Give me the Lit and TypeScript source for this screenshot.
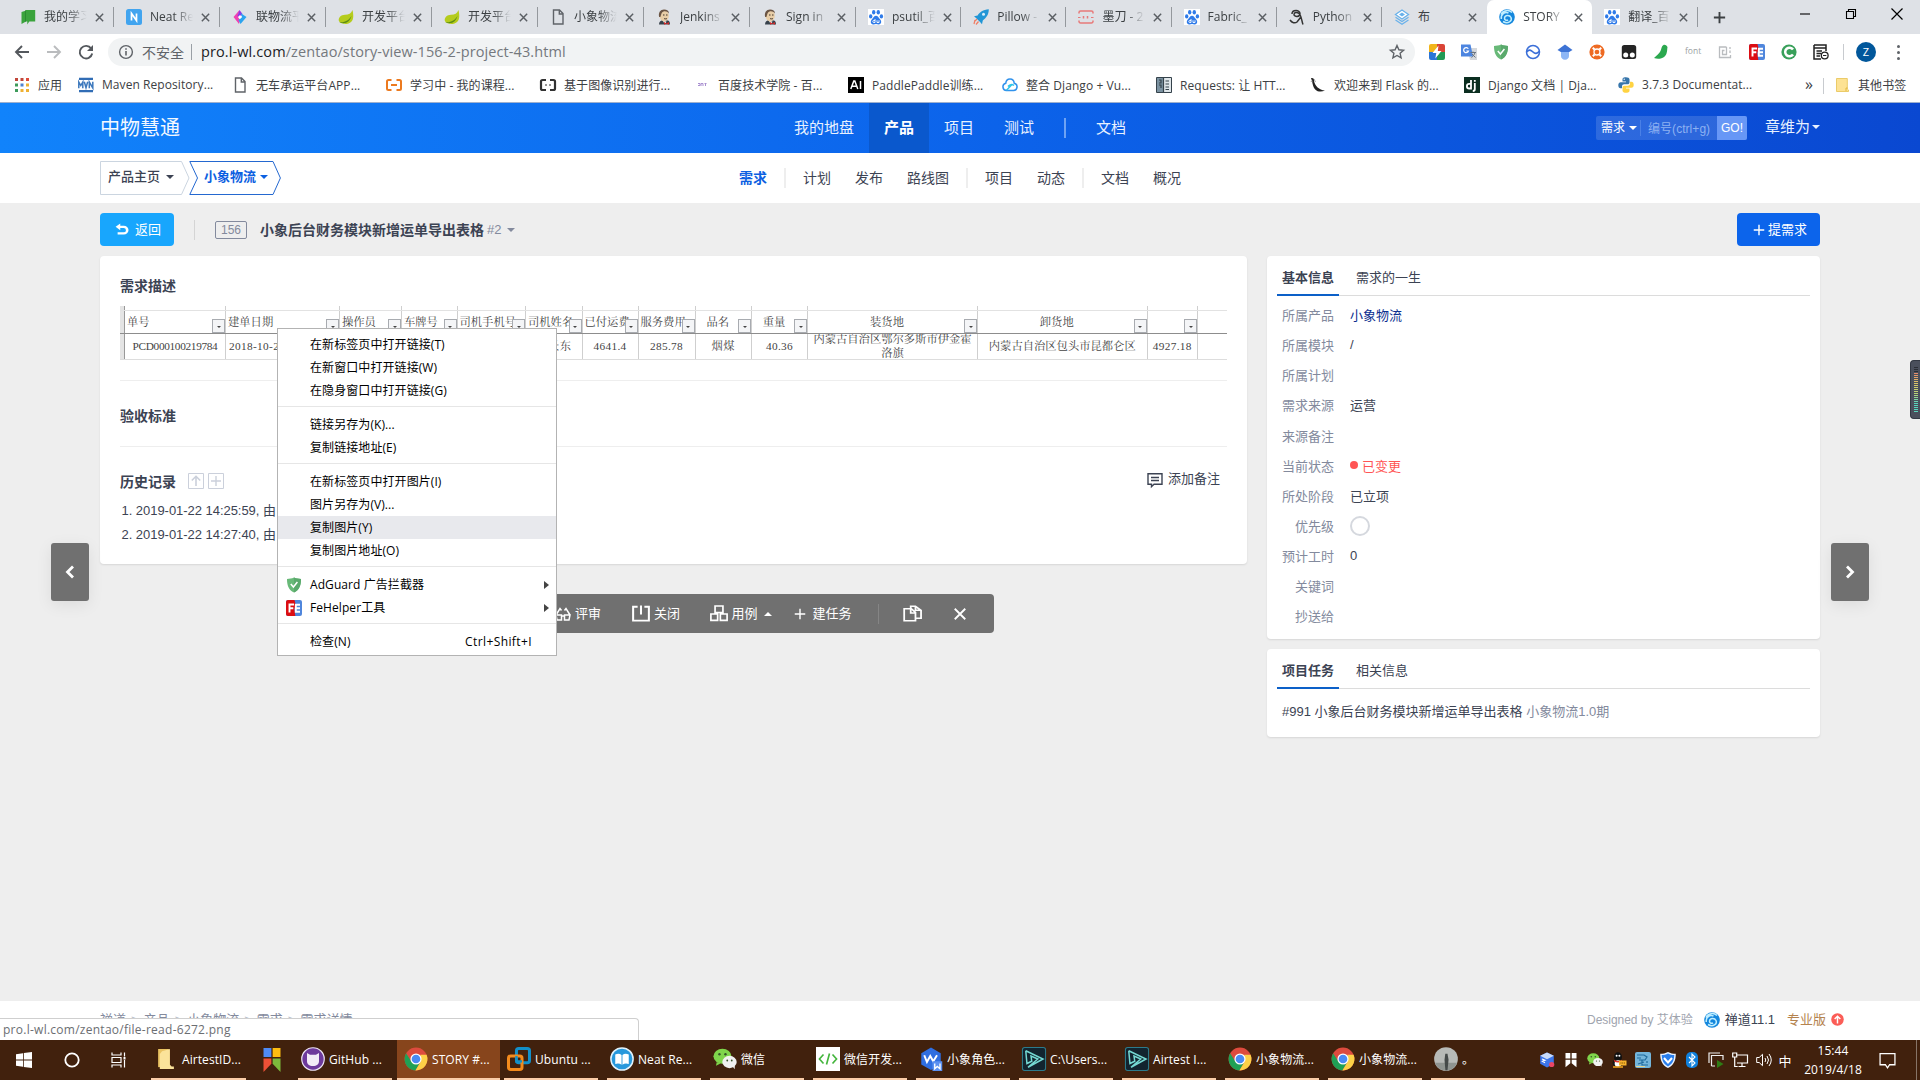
import { LitElement, html, svg, css, nothing } from "lit";
import { customElement, property } from "lit/decorators.js";
import { classMap } from "lit/directives/class-map.js";

/* ---------- icon artwork, 16x16 grid ---------- */
const chromeBall = svg`<circle cx="8" cy="8" r="7.6" fill="#dd4b3e"/><path d="M1.4 4.2A7.6 7.6 0 0 0 7.6 15.6L11 9.8 8 8 4.9 9.7z" fill="#1fa055"/><path d="M15.1 5.2A7.6 7.6 0 0 1 7.6 15.6L11.2 9.6 10.9 5.2z" fill="#fdd047"/><circle cx="8" cy="8" r="3.7" fill="#fff"/><circle cx="8" cy="8" r="2.9" fill="#4a8af4"/>`;
const paw = svg`<rect width="16" height="16" fill="#fff"/><g fill="#2f7be9"><ellipse cx="2.7" cy="7.4" rx="1.7" ry="2.1"/><ellipse cx="5.7" cy="3.2" rx="1.7" ry="2.2"/><ellipse cx="10.3" cy="3.2" rx="1.7" ry="2.2"/><ellipse cx="13.4" cy="7.4" rx="1.7" ry="2.1"/><path d="M8 6.8c2 0 2.5 2 4 3.4 2 2 1.4 5-1.2 5.2-1 .1-1.800-.3-2.800-.3s-1.800.4-2.800.3C2.600 15.200 2 12.200 4 10.200 5.500 8.800 6 6.800 8 6.800z"/></g><path d="M7 10v3.500H5.800a1 1 0 0 1 0-2H7M9 11.300v2.200h2v-2.200" fill="none" stroke="#fff" stroke-width=".9"/>`;
const leaf = svg`<path d="M14.500 1C15.600 6 16.500 12.500 10.500 14.400 6 15.800 1.500 14 .8 11.800.3 8.500 3 6 7 5.800c4 0 6-1.500 7.500-4.800z" fill="#b5cc1c"/><path d="M1.200 13.200c5 .8 9.800-1.600 12.300-6.400-1.300 6-6.500 9.200-12.300 6.400z" fill="#5c8c14"/>`;
const page = svg`<path d="M3.500 1h6l3.500 3.600V15h-9.500zM9.300 1v4H13" fill="none" stroke="#5f6368" stroke-width="1.400"/>`;
const jenkins = svg`<path d="M3 15.500c0-3 2-4 4-4.500l5 .500c1.500.5 2 2 2 4z" fill="#38424c"/><path d="M7 12l2 3.500 1.500-3z" fill="#fff"/><ellipse cx="8.200" cy="6.700" rx="4.600" ry="5.900" fill="#e8cda6"/><path d="M3.200 8C2 3.500 4.500.4 8 .4c3 0 5 1.600 5 4-1.500-2-3.500-2.500-5.500-2C5.500 3 5.200 5.500 4.400 8z" fill="#6a5444"/><path d="M7 6h1.500M10 6h1.500M8 9.500c1 .500 2 .500 3 0" stroke="#41342b" stroke-width="1" fill="none"/><path d="M8 13l2.500 1.200L13 13v2.800l-2.500-1L8 15.800z" fill="#c92b2b"/>`;
const shield = svg`<path d="M8 .5c2.200 1 4.700 1.400 7 1.400 0 6-1.400 10.700-7 13.700C2.400 12.600 1 7.900 1 1.900 3.300 1.900 5.800 1.500 8 .5z" fill="#68b978"/><path d="M8 .5c2.200 1 4.700 1.400 7 1.400 0 6-1.400 10.700-7 13.700z" fill="#5aa96c"/><path d="M4.800 7l2.600 3 4-5" fill="none" stroke="#fff" stroke-width="1.500"/>`;
const fe = svg`<rect width="16" height="16" rx="2" fill="#4f86dc"/><path d="M2 0h6.500l1.300 5-1.500 4 1 7H2a2 2 0 0 1-2-2V2a2 2 0 0 1 2-2z" fill="#dc0d12"/><path d="M3.500 12.500v-8H8M3.500 8.300h3.800M14 4.700H9.800v7H14M9.800 8.200H14" stroke="#fff" stroke-width="1.900" fill="none"/>`;
const wechat = svg`<ellipse cx="6.300" cy="6.200" rx="6" ry="5" fill="#7fd54b"/><path d="M2.500 10l-.5 2.500 3-1.500z" fill="#7fd54b"/><ellipse cx="11" cy="10" rx="4.800" ry="4.100" fill="#f1f1f1"/><path d="M13 13l1.500 1.800v-2.500z" fill="#f1f1f1"/><g fill="#37542a"><circle cx="4.300" cy="4.800" r=".8"/><circle cx="8.300" cy="4.800" r=".8"/><circle cx="9.500" cy="9" r=".6"/><circle cx="12.500" cy="9" r=".6"/></g>`;
const airtest = svg`<rect x=".3" y=".3" width="15.400" height="15.400" rx="1.500" fill="#12242f" stroke="#2c7b8c" stroke-width=".7"/><path d="M2.500 2.500L14 8 4 13.500M2.500 2.500l.8 8.500L6.500 9.500 6 6l4.500 2-6.500 5.500" fill="none" stroke="#75d9d3" stroke-width="1"/>`;
const zenBall = svg`<circle cx="8" cy="8" r="7.800" fill="#1487dd"/><path d="M2 5.500C4 1 10 .500 13 3.500M2.300 10C1.500 5 6 2.500 9.500 4M4 12.500C9 15.500 13.500 12 12 8.500c-1.500-3-6-2.500-6.500.5-.2 2 2 3 3.500 1.800" fill="none" stroke="#bfeeff" stroke-width="1.500"/>`;

const ICONS: Record<string, unknown> = {
  chromeBall, paw, leaf, page, jenkins, shield, fe, wechat, airtest, zenBall,
  book: svg`<path d="M1.500 3l4-1.300v11L1.500 15zM5.500 1h9.700v11.500H9.300l-2 3v-3H5.500z" fill="#3aa33c"/><path d="M5.500 1.300v11.500" stroke="#217a28" stroke-width=".6"/>`,
  neat: svg`<rect width="16" height="16" rx="2.500" fill="#41a4ef"/><path d="M5.500 11.500V4.500l5 7v-7" fill="none" stroke="#fff" stroke-width="1.700"/>`,
  gem: svg`<path d="M7.500 1L1.500 8l5.500 7 1-4-2-3z" fill="#ef42b2"/><path d="M7.500 1l3 4-3 4-2-2z" fill="#8e36e6"/><path d="M8.500 4L14.500 8 8.500 15l-2-4 3.500-3z" fill="#2ba4ef"/><path d="M8 6l2 2-2 2-2-2z" fill="#fff"/>`,
  rocket: svg`<path d="M15.800.3C10 .5 6.600 3.600 4.600 6.500L1 7.300l2 1.600 4.300 4.300L9 15.300l.8-3.800C13 9 15.800 6 15.800.3z" fill="#2196d6"/><circle cx="10.500" cy="5.300" r="1.500" fill="#d7eefb"/><path d="M1 15l1-4M3 15.500l2.500-3M1.500 12.500L4 10" stroke="#ef7c63" stroke-width="1.200"/>`,
  modao: svg`<path d="M1 4.500V3.500a1.500 1.500 0 0 1 1.500-1.500h11A1.500 1.500 0 0 1 15 3.500v1M1 11.500v1A1.500 1.500 0 0 0 2.500 14h11a1.500 1.500 0 0 0 1.500-1.500v-1M5.500 7v2.500M9.500 7v2.500" fill="none" stroke="#e77a7a" stroke-width="1.500"/><path d="M0 8.500h2.500M13 8.500h2.500" stroke="#e77a7a" stroke-width="1"/>`,
  pyglyph: svg`<path d="M3 5c0-4.500 8-4.500 8-.5S5 8 5 5.500s3-2.500 5-1c2.500 2 2.500 7 4 11M11.500 8.500L8 13c-2 1.500-5 1-7-2" fill="none" stroke="#333" stroke-width="1.500"/>`,
  layers: svg`<path d="M8 1l6.500 4.500L8 10 1.500 5.500z" fill="#fff" stroke="#69b1ea" stroke-width="1.300"/><path d="M8 3.500l3 2-3 2-3-2z" fill="#69b1ea"/><path d="M1.500 8.300L8 12.500l6.500-4.200M1.500 11L8 15.200l6.500-4.200" fill="none" stroke="#69b1ea" stroke-width="1.200"/>`,
  apps: svg`<g><path d="M1 1h3v3H1zM6.500 1h3v3h-3z" fill="#c1463a"/><path d="M12 1h3v3h-3z" fill="#de4b3b"/><path d="M1 6.500h3v3H1z" fill="#3d9b5b"/><path d="M6.500 6.500h3v3h-3z" fill="#4f82cf"/><path d="M12 6.500h3v3h-3z" fill="#efb133"/><path d="M1 12h3v3H1z" fill="#3d9b5b"/><path d="M6.500 12h3v3h-3zM12 12h3v3h-3z" fill="#efb133"/></g>`,
  mvn: svg`<path d="M1 .8h14v2.300H1zM1 13h14v2.300H1z" fill="#316db5"/><path d="M.8 11.300V5l2 3.500 2-3.500v6.300M6.300 4.800l1.700 6 1.700-6M11.300 11.300V5l3.500 6V4.800" fill="none" stroke="#3d79bd" stroke-width="1.500"/>`,
  brO: svg`<path d="M5.500 3H2.500Q1 3 1 4.500v7Q1 13 2.500 13h3M10.500 3h3Q15 3 15 4.500v7q0 1.500-1.500 1.500h-3M5 8h6" fill="none" stroke="#ec7a1f" stroke-width="2"/>`,
  brK: svg`<path d="M6 3H2.500Q1 3 1 4.500v7Q1 13 2.500 13H6M10 3h3.500Q15 3 15 4.500v7q0 1.500-1.500 1.500H10M5.500 8h1M9.500 8h1" fill="none" stroke="#333" stroke-width="2.200"/>`,
  tiny: svg`<path d="M4 6.500h2v2H4M7 9V6.500h2V9M10.500 6.500h2M11.500 6.500V9" fill="none" stroke="#a88fd0" stroke-width="1"/>`,
  ai: svg`<rect width="16" height="16" fill="#000"/><path d="M2.800 12l3-8h1l3 8M4 9.300h4.600M12.500 4v8" fill="none" stroke="#fff" stroke-width="1.500"/>`,
  cloud: svg`<path d="M4.500 13.500a3.700 3.700 0 0 1-.7-7.300C4 3.500 6 2 8 2s4 1.500 4.200 4.200a3.700 3.700 0 0 1-.7 7.300z" fill="none" stroke="#3192ec" stroke-width="1.500"/><path d="M4.500 13.200L10 7.500M6 9.500c1.500-2 4-2.500 6-1" fill="none" stroke="#2fc4e9" stroke-width="1.500"/>`,
  reqs: svg`<path d="M.5.5h15v15H.5z" fill="#dfe6ea" stroke="#35424b"/><path d="M1 1h6v14H1z" fill="#7b92a1"/><path d="M7.500 1v14M3 3h2v3H3M3 8h2v3M9.500 4H13M9.500 7H13M9.500 10H13M9.500 12.500H13" fill="none" stroke="#35424b" stroke-width="1.200"/>`,
  flask: svg`<path d="M1 1c2-.5 3.500.5 3 3C5 9 9 13 15 13.500c-3.500 1.800-7.500 1.300-9.500-.8C3 10.500 2.500 6 2 4z" fill="#222"/><path d="M4 2l1.500 3M.8 4.500L3 4" stroke="#888" stroke-width=".8"/>`,
  dj: svg`<rect width="16" height="16" fill="#0b2e20"/><path d="M7 3v8.500H5.200a2.200 2.200 0 0 1 0-4.600H7M10.800 6v6.300c0 1.200-.8 1.700-2 1.700M10.800 3v1.700" fill="none" stroke="#fff" stroke-width="1.800"/>`,
  python: svg`<path d="M7.800.3C4.800.3 4.500 1.600 4.500 2.600v1.800H8v.8H2.700C1 5.200.3 6.500.3 8.300s.9 3 2.200 3H4V9.500c0-1.500 1-2.200 2.300-2.200h3.400c1 0 1.800-.8 1.800-1.800V2.600C11.500 1 10 .3 7.800.3z" fill="#3776ab"/><path d="M8.200 15.700c3 0 3.300-1.300 3.300-2.300v-1.800H8v-.8h5.300c1.700 0 2.400-1.300 2.400-3.100s-.9-3-2.200-3H12v1.800c0 1.500-1 2.200-2.300 2.200H6.300c-1 0-1.800.8-1.800 1.800v2.900c0 1.600 1.500 2.300 3.700 2.300z" fill="#ffd342"/><circle cx="6.200" cy="2.300" r=".7" fill="#fff"/>`,
  folderY: svg`<path d="M2.500 1.500h10.800v10.500l1.200 1V14.500h-12z" fill="#fde293" stroke="#e9c65d" stroke-width=".9"/><path d="M12 14v-3h1.500" fill="none" stroke="#e2b93f"/>`,
  info: svg`<circle cx="8" cy="8" r="6.400" fill="none" stroke="#5f6368" stroke-width="1.400"/><path d="M8 7v4.500M8 4.300v1.500" stroke="#5f6368" stroke-width="1.600"/>`,
  back: svg`<path d="M15 8H2.500M8 2L2 8l6 6" fill="none" stroke="#54585d" stroke-width="1.900"/>`,
  fwd: svg`<path d="M1 8h12.500M8 2l6 6-6 6" fill="none" stroke="#babcbe" stroke-width="1.900"/>`,
  reload: svg`<path d="M13.200 4.500A6.300 6.300 0 1 0 14.200 9.500" fill="none" stroke="#54585d" stroke-width="1.900"/><path d="M15 1v6H9z" fill="#54585d"/>`,
  star: svg`<path d="M8 1.500l1.900 4.300 4.700.4-3.500 3.100 1 4.600L8 11.500l-4.100 2.400 1-4.600L1.400 6.200l4.700-.4z" fill="none" stroke="#5f6368" stroke-width="1.400"/>`,
  bolt: svg`<path d="M0 2a2 2 0 0 1 2-2h6v8H0z" fill="#f1b51b"/><path d="M8 0h6a2 2 0 0 1 2 2v6H8z" fill="#da4436"/><path d="M0 8h8v8H2a2 2 0 0 1-2-2z" fill="#2b75d6"/><path d="M8 8h8v6a2 2 0 0 1-2 2H8z" fill="#229955"/><path d="M9.500 1.500L3.500 9h3.800l-1 5.500L12.500 7H8.800z" fill="#fff"/>`,
  gtrans: svg`<path d="M6 4h10v12H9z" fill="#d5d8dc"/><path d="M0 .5h9.500L12 12.500H0z" fill="#4d85e0"/><path d="M7.300 4.800A2.500 2.500 0 1 0 7.500 7H5.300" fill="none" stroke="#fff" stroke-width="1.200"/><path d="M9.500 8.500H15M12 7.500v1M14 8.500c-.5 2-2 4-3.500 5M11 10l3.500 3.500" fill="none" stroke="#6b7480" stroke-width="1"/>`,
  ring: svg`<circle cx="8" cy="8" r="6.500" fill="none" stroke="#3b6fd8" stroke-width="1.500"/><path d="M1.500 8C4 5 6 6 8 8s4 2 6.500-1" fill="none" stroke="#3b6fd8" stroke-width="1.700"/>`,
  gradcap: svg`<path d="M8 .5l7.500 5.500L8 10.500.5 6z" fill="#3d73d5"/><path d="M4 8h8v4c0 2-1.500 3.700-4 3.700S4 14 4 12z" fill="#8db6f5"/>`,
  orange: svg`<circle cx="8" cy="8" r="7.600" fill="#ee6a22"/><circle cx="8" cy="8" r="3" fill="none" stroke="#fff" stroke-width="1.300"/><path d="M3.800 3.800l1.700 1.700M12.200 3.800l-1.700 1.700M3.800 12.200l1.700-1.700M12.200 12.200l-1.700-1.700" stroke="#fff" stroke-width="2"/>`,
  tamper: svg`<rect x=".8" y="1" width="14.400" height="14" rx="2.500" fill="#242424"/><circle cx="4.700" cy="11" r="2.500" fill="#fff"/><circle cx="11.300" cy="11" r="2.500" fill="#fff"/>`,
  bird: svg`<path d="M10.500 1C8.500 2 8.500 4.500 7.500 7c-1 2.500-4 4.500-6.500 7 5 2 11 0 12.500-4.500 1-3 .5-4 1-6.500-1-2-3-2.500-4-2z" fill="#2ba84f"/>`,
  spiral: svg`<path d="M9.500 3H2.500v10.500h11V11M9.500 3v7.500H5.500V6.500h2M13 3v2M13 6.500V9" fill="none" stroke="#b9bcbf" stroke-width="1.300"/>`,
  cgreen: svg`<circle cx="8" cy="8" r="7.600" fill="#38a05a"/><path d="M12 5.500a4.300 4.300 0 1 0 0 5" fill="none" stroke="#fff" stroke-width="2.500"/>`,
  docclock: svg`<path d="M1 1h12v6M1 1v14h7" fill="none" stroke="#222" stroke-width="1.500"/><path d="M1 4h12M3.500 7H9M3.500 9.500H8M3.500 12H7" stroke="#222" stroke-width="1.300"/><circle cx="11.700" cy="11.500" r="3.400" fill="#fff" stroke="#222" stroke-width="1.300"/><path d="M10 11.500h3.400" stroke="#222"/>`,
  undo: svg`<path d="M6 .5v2.800h4a5.400 5.400 0 0 1 0 10.900H3v-2.700h6.800a2.700 2.700 0 0 0 0-5.400H6v2.800L.7 4.700z" fill="#fff"/>`,
  comment: svg`<path d="M1 1.700h14v10.600H7l-2.500 2.400v-2.400H1zM4 5.500h8M4 8.500h8" fill="none" stroke="#3c4353" stroke-width="1.400"/>`,
  boxUp: svg`<path d="M.5.5h15v15H.5z" fill="none" stroke="#cbd0db"/><path d="M8 13V4M3.800 7.500L8 3.300l4.200 4.200" fill="none" stroke="#cbd0db" stroke-width="1.600"/>`,
  boxPlus: svg`<path d="M.5.5h15v15H.5z" fill="none" stroke="#cbd0db"/><path d="M8 3v10M3 8h10" fill="none" stroke="#cbd0db" stroke-width="1.400"/>`,
  plus: svg`<path d="M8 1v14M1 8h14" stroke="currentColor" stroke-width="1.900"/>`,
  close: svg`<path d="M2 2l12 12M14 2L2 14" stroke="currentColor" stroke-width="2.100"/>`,
  left: svg`<path d="M11 2.500L5.500 8l5.500 5.500" fill="none" stroke="#fff" stroke-width="2.800"/>`,
  right: svg`<path d="M5 2.500L10.500 8 5 13.500" fill="none" stroke="#fff" stroke-width="2.800"/>`,
  glasses: svg`<path d="M1 9h5.500v5H2zM9.500 9H15l-1 5H9.500zM6.500 10h3M1 9l4-6.500 1.500 2M15 9l-4-6.500-1.500 2" fill="none" stroke="#fff" stroke-width="1.500"/>`,
  off: svg`<path d="M5 1.700H1v13h14v-13h-4M8 .5v8.500" fill="none" stroke="#fff" stroke-width="1.800"/>`,
  usecase: svg`<path d="M4.500 1h7v6h-7zM.8 8.500h6v6h-6zM9.200 8.500h6v6h-6z" fill="none" stroke="#fff" stroke-width="1.500"/>`,
  copy: svg`<path d="M6.500 3.500V1.200h4L15.200 5v7.500H11M10.500 1.200V5h4.700M1 3.500h6L10.500 7v7.800H1zM6.500 3.500V7.500h4" fill="none" stroke="#fff" stroke-width="1.500"/>`,
  upBadge: svg`<circle cx="8" cy="8" r="7.700" fill="#fb5d57"/><path d="M8 13V4.500M4.500 7.500L8 4l3.500 3.500" fill="none" stroke="#fff" stroke-width="1.800"/>`,
  win: svg`<path d="M0 2.200l7-1v6.400H0zM7.800 1.100L16 0v7.600H7.800zM0 8.400h7v6.400l-7-1zM7.800 8.400H16V16l-8.200-1.100z" fill="#fff"/>`,
  cortana: svg`<circle cx="8" cy="8" r="6.700" fill="none" stroke="#fff" stroke-width="1.800"/>`,
  taskview: svg`<path d="M1 .5V3h9V.5M1 5.500h9v5H1zM1 15.500V13h9v2.500M13.500.5v4M13.500 8v7.500" fill="none" stroke="#fff" stroke-width="1.200"/><path d="M12.500 5h2v2.500h-2z" fill="#fff"/>`,
  folder: svg`<path d="M1 0h9.500v14.500H1z" fill="#e9c261"/><path d="M4.500 1.800l7-1.800v12.500l1.500 1.500H15V16H2.500V4z" fill="#fbe39a"/>`,
  flag4: svg`<path d="M1.200 0h6.300v6H1.200z" fill="#4f8bf5"/><path d="M8.500 0h6.300v6H8.500z" fill="#fdbd10"/><path d="M1.200 7h6.300v3.500L1.200 16z" fill="#ee5036"/><path d="M8.500 7h6.300v9L8.500 10.500z" fill="#7db93b"/>`,
  github: svg`<circle cx="8" cy="8" r="7.500" fill="#6d3a9c" stroke="#ece4f3" stroke-width=".8"/><path d="M4 4l2 1.200h4L12 4v5.500c0 2-1.500 3.200-4 3.200s-4-1.200-4-3.200z" fill="#f2ecf7"/>`,
  vmware: svg`<rect x="6.300" y="1" width="8.700" height="9.500" rx="1.500" fill="none" stroke="#1390c9" stroke-width="2"/><rect x="1" y="6" width="9" height="9" rx="1.500" fill="none" stroke="#f38b1c" stroke-width="2"/><path d="M6.300 6v3.500h3.700" fill="none" stroke="#1390c9" stroke-width="1.500"/>`,
  reader: svg`<circle cx="8" cy="8" r="7.400" fill="#2798dc" stroke="#e2f2fb" stroke-width="1"/><path d="M3.500 5q2.500-1 4.200.3v6.500Q6 10.500 3.500 11.300zM12.500 5q-2.500-1-4.200.3v6.500q1.700-1.300 4.200-.5z" fill="#fff"/>`,
  wxdev: svg`<rect width="16" height="16" fill="#fff"/><path d="M5 5L2.300 8 5 11M11 5l2.700 3L11 11M9 4.300L7 11.700" fill="none" stroke="#43b53c" stroke-width="1.100"/>`,
  wps: svg`<path d="M8 .4l6.500 3.700v7.500L8 15.300l-6.500-3.700V4.100z" fill="#2f6ee0"/><path d="M3.500 5.500L5.300 10 7.500 6l2 3.500 2.500-4" fill="none" stroke="#fff" stroke-width="1.300"/><path d="M9 9.500h6.500V16H9z" fill="#5b90f1"/><path d="M10.500 11v3.500l1.700-1.500 1.800 1.500V11" fill="none" stroke="#fff" stroke-width=".9"/>`,
  photo: svg`<circle cx="8" cy="8" r="7.900" fill="#b7bab7"/><path d="M.6 10.500h14.800A7.900 7.900 0 0 1 .6 10.500z" fill="#8f9490"/><path d="M7.500 4.500h1.500l.7 4-.7 7H7.600L7 8.500z" fill="#454a49"/>`,
  cube: svg`<path d="M8 .5l6.800 3.300v8L8 15.500l-6.800-3.700v-8z" fill="#3b75ea"/><path d="M8 .5l6.800 3.300L8 7.300 1.200 3.800z" fill="#c8dbfa"/><path d="M3 7l3 1.300-2.500 1L6 10.700" fill="none" stroke="#fff" stroke-width="1.200"/><circle cx="12.700" cy="12.500" r="2.600" fill="#ea4667"/>`,
  ribbon: svg`<path d="M2.500 1h4.800v5.500H2.500zM8.700 1h4.800v5.500H8.700zM2.500 7.700h4.800v3.500l-4.800 4zM8.700 7.700h4.800v7.500l-4.800-4z" fill="#fff"/>`,
  qq: svg`<ellipse cx="7" cy="5" rx="4" ry="4.700" fill="#111"/><ellipse cx="7" cy="11" rx="5.500" ry="4" fill="#161616"/><ellipse cx="7" cy="11.500" rx="3.300" ry="3.200" fill="#fff"/><circle cx="5.600" cy="3.800" r="1" fill="#fff"/><circle cx="8.400" cy="3.800" r="1" fill="#fff"/><path d="M3 8q4 2 8 0v1.500q-4 2-8 0z" fill="#e4342c"/><path d="M8 8.500h7.500v5H8z" fill="#f7b32c"/><path d="M2 15h10" stroke="#f7a91c" stroke-width="1.500"/><path d="M9.500 11h4.500" stroke="#7b4b00" stroke-dasharray="1 .7"/>`,
  gear: svg`<rect width="16" height="16" rx="2" fill="#74b5da"/><path d="M2 3h7l3 2-2 3H4M2 6h4M7 8v5h6M3 12l6-2M12 9v2" stroke="#1f6a9c" stroke-width="1.200" fill="none"/><path d="M1 14.500h9" stroke="#e6d58f"/>`,
  guard: svg`<path d="M8 0c2.500 1.300 5 1.800 7.800 1.800C15.800 9 13.500 13.500 8 16 2.500 13.500.2 9 .2 1.800 3 1.800 5.500 1.300 8 0z" fill="#eaf3ff"/><path d="M8 1.500c2 1 4 1.500 6.300 1.600C14 9 12 12.500 8 14.500 4 12.500 2 9 1.700 3.100 4 3 6 2.500 8 1.500z" fill="#2a7fee"/><path d="M4 6l4 4.500L12 6" fill="none" stroke="#fff" stroke-width="2"/>`,
  bt: svg`<rect x="2" width="12" height="16" rx="5" fill="#1080dc"/><path d="M5 5l6 6-3 3V2l3 3-6 6" fill="none" stroke="#fff" stroke-width="1.100"/>`,
  screens: svg`<path d="M1 11V1h11M3.500 14V3.500H15V8M3.500 14H7" fill="none" stroke="#eee" stroke-width="1.200"/><path d="M9 8l6.500 4L9 16z" fill="#2f7d14"/>`,
  net: svg`<path d="M5 3h10.500v8H5M10 11v3.500M6.500 14.500h7M.7 1h4v4h-4zM2.700 5v9.500h3" fill="none" stroke="#fff" stroke-width="1.200"/>`,
  sound: svg`<path d="M.7 5.500h2.500L6.500 2.300v11.400L3.200 10.500H.7zM9 6q1.500 2 0 4M11 4q3 4 0 8M13 2q4.500 6 0 12" fill="none" stroke="#fff" stroke-width="1"/>`,
  note: svg`<path d="M1 1.500h14v10.500h-5L8 15l-2-3H1z" fill="none" stroke="#fff" stroke-width="1.200"/>`,
  newtab: svg`<path d="M8 2v12M2 8h12" stroke="#3c4043" stroke-width="2"/>`,
  tabx: svg`<path d="M3.500 3.500l9 9M12.500 3.500l-9 9" stroke="#5a5e63" stroke-width="1.800"/>`,
  min: svg`<path d="M3 8h10" stroke="#000" stroke-width="1.100"/>`,
  restore: svg`<path d="M3.500 5.500h7v7h-7zM5.500 5V3.500h7v7H11" fill="none" stroke="#000" stroke-width="1.100"/>`,
  winx: svg`<path d="M2.500 2.500l11 11M13.500 2.500l-11 11" stroke="#000" stroke-width="1.200"/>`,
};

@customElement("ui-icon")
export class UiIcon extends LitElement {
  @property() name = "";
  static styles = css`
    :host { display: block; flex: none; width: 16px; height: 16px; }
    svg { display: block; width: 100%; height: 100%; overflow: visible; }
  `;
  render() {
    return html`<svg viewBox="0 0 16 16" preserveAspectRatio="none">${ICONS[this.name] ?? nothing}</svg>`;
  }
}

const TABS: [string, string][] = [
  ["book", "我的学习"], ["neat", "Neat Re"], ["gem", "联物流平"], ["leaf", "开发平台"],
  ["leaf", "开发平台"], ["page", "小象物流"], ["jenkins", "Jenkins"], ["jenkins", "Sign in"],
  ["paw", "psutil_百"], ["rocket", "Pillow -"], ["modao", "墨刀 - 2"], ["paw", "Fabric_"],
  ["pyglyph", "Python"], ["layers", "布"], ["zenBall", "STORY"], ["paw", "翻译_百"],
];
const EXTS = ["bolt", "gtrans", "shield", "ring", "gradcap", "orange", "tamper", "bird", "font", "spiral", "fe", "cgreen", "docclock"];
const MARKS: [string, string][] = [
  ["mvn", "Maven Repository..."], ["page", "无车承运平台APP..."], ["brO", "学习中 - 我的课程..."],
  ["brK", "基于图像识别进行..."], ["tiny", "百度技术学院 - 百..."], ["ai", "PaddlePaddle训练..."],
  ["cloud", "整合 Django + Vu..."], ["reqs", "Requests: 让 HTT..."], ["flask", "欢迎来到 Flask 的..."],
  ["dj", "Django 文档 | Dja..."], ["python", "3.7.3 Documentat..."],
];

@customElement("browser-chrome")
export class BrowserChrome extends LitElement {
  static styles = css`
    :host { display: block; font-family: "Open Sans", "Noto Sans CJK SC", sans-serif; color: #3c4043; }
    .strip { height: 34px; background: #dee1e6; display: flex; padding-left: 8px; }
    .tab { width: 106px; height: 34px; box-sizing: border-box; padding-left: 12px; display: flex; align-items: center; flex: none; }
    .tab.slim { width: 105.200px; }
    .tab.line { background: linear-gradient(#94989d, #94989d) right 7px / 1px 20px no-repeat; }
    .tab.active { background: #fff; border-radius: 7px 7px 0 0; }
    .tab .cap { width: 43px; margin-left: 8px; overflow: hidden; white-space: nowrap; font-size: 12px; line-height: 20px; -webkit-mask-image: linear-gradient(90deg, #000 55%, transparent); mask-image: linear-gradient(90deg, #000 55%, transparent); }
    .tab.short .cap { -webkit-mask-image: none; mask-image: none; }
    .tab .x { width: 13px; height: 13px; margin-left: 5.500px; }
    .newtab { width: 15px; height: 15px; margin: 10px 0 0 14px; }
    .ctl { margin-left: auto; display: flex; gap: 30px; padding: 6px 15px 0 0; }
    .bar { height: 36px; display: flex; align-items: center; background: #fff; }
    .nav { display: flex; gap: 16px; padding-left: 14px; width: 94px; }
    .omni { width: 1307px; box-sizing: border-box; height: 28px; border-radius: 14px; background: #f1f3f4; display: flex; align-items: center; padding: 0 10px; color: #5f6368; white-space: nowrap; }
    .omni span { padding-bottom: 1px; }
    .sec { margin-left: 8px; font-size: 14px; width: 49px; }
    .vbar { width: 1px; height: 16px; background: #9aa0a6; margin-right: 9px; }
    .url { font-size: 14.500px; letter-spacing: 0.100px; color: #74787d; }
    .url b { font-weight: 400; color: #202124; }
    .star { margin-left: auto; }
    .exts { display: flex; gap: 16px; margin-left: 14px; align-items: center; }
    .font { width: 16px; font-size: 8.500px; line-height: 12px; color: #9c9fa3; margin-top: -3px; }
    .sep { width: 1px; height: 16px; background: #c8cbcf; margin-left: 14px; }
    .ava { width: 20px; height: 20px; border-radius: 50%; background: #01579b; color: #fff; font-size: 11px; line-height: 20px; text-align: center; margin-left: 12px; }
    .dots { display: flex; flex-direction: column; gap: 3px; margin-left: 21px; }
    .dots i { width: 3px; height: 3px; border-radius: 50%; background: #5f6368; }
    .marks { height: 32px; display: flex; align-items: center; background: #fff; border-bottom: 1px solid #9db0cf; padding-left: 14px; font-size: 12px; white-space: nowrap; }
    .apps { display: flex; gap: 8px; width: 64px; align-items: center; padding-bottom: 3px; }
    .mark { display: flex; align-items: center; width: 154px; gap: 8px; height: 20px; padding-bottom: 3px; letter-spacing: .070px; }
    .more { margin-left: 33px; font-size: 16px; padding-bottom: 5px; width: 18px; }
    .msep { width: 1px; height: 16px; background: #c8cbcf; margin-right: 10px; }
    .mark.last { width: auto; }
  `;
  render() {
    return html`
      <div class="strip">
        ${TABS.map(([icon, cap], i) => html`
          <div class=${classMap({ tab: true, slim: i > 7, active: i === 14, line: i !== 13 && i !== 14, short: i === 13 })}>
            <ui-icon name=${icon}></ui-icon><span class="cap">${cap}</span><ui-icon class="x" name="tabx"></ui-icon>
          </div>`)}
        <ui-icon class="newtab" name="newtab"></ui-icon>
        <div class="ctl"><ui-icon name="min"></ui-icon><ui-icon name="restore"></ui-icon><ui-icon name="winx"></ui-icon></div>
      </div>
      <div class="bar">
        <div class="nav"><ui-icon name="back"></ui-icon><ui-icon name="fwd"></ui-icon><ui-icon name="reload"></ui-icon></div>
        <div class="omni">
          <ui-icon name="info"></ui-icon><span class="sec">不安全</span><i class="vbar"></i>
          <span class="url"><b>pro.l-wl.com</b>/zentao/story-view-156-2-project-43.html</span>
          <ui-icon class="star" name="star"></ui-icon>
        </div>
        <div class="exts">
          ${EXTS.map((e) => e === "font" ? html`<span class="font">font</span>` : html`<ui-icon name=${e}></ui-icon>`)}
        </div>
        <i class="sep"></i><div class="ava">Z</div><div class="dots"><i></i><i></i><i></i></div>
      </div>
      <div class="marks">
        <div class="apps"><ui-icon name="apps"></ui-icon>应用</div>
        ${MARKS.map(([icon, cap]) => html`<div class="mark"><ui-icon name=${icon}></ui-icon><span>${cap}</span></div>`)}
        <span class="more">»</span><i class="msep"></i>
        <div class="mark last"><ui-icon name="folderY"></ui-icon>其他书签</div>
      </div>`;
  }
}

@customElement("site-header")
export class SiteHeader extends LitElement {
  static styles = css`
    :host { display: block; font-family: "Liberation Sans", "Noto Sans CJK SC", sans-serif; color: #3c4353; white-space: nowrap; }
    .top { height: 50px; box-sizing: border-box; background: linear-gradient(90deg, #1183fb, #0c64eb 50%, #0a48d1); color: #e8f1ff; display: grid; grid-template-columns: 779px 1fr auto; padding-right: 100px; align-items: center; }
    .logo { padding-left: 100px; font-size: 20px; line-height: 50px; color: #f2f8ff; }
    .nav { display: flex; font-size: 15px; line-height: 50px; height: 50px; }
    .nav span { padding: 0 15px; }
    .nav .on { background: #0a58cd; font-weight: 700; color: #fff; }
    .nav i { width: 2px; height: 20px; margin: 15px; background: #6ea3f4; align-self: flex-start; }
    .right { display: flex; align-items: center; }
    .search { display: flex; height: 24px; width: 151px; border-radius: 2px; background: rgba(255,255,255,.14); align-items: center; overflow: hidden; font-size: 12px; }
    .kind { width: 45px; box-sizing: border-box; padding-left: 5px; display: flex; gap: 4px; align-items: center; border-right: 1px solid #4a80e6; height: 16px; line-height: 16px; color: #fff; }
    .ph { width: 76px; padding: 0 0 2px 7px; box-sizing: border-box; color: #8db1f2; letter-spacing: .050px; }
    .go { background: #6797f6; width: 30px; line-height: 24px; text-align: center; color: #fff; }
    .caret { width: 0; height: 0; border: 4px solid transparent; border-top-color: currentColor; border-bottom: 0; flex: none; }
    .user { font-size: 15px; margin: 0 0 0 18px; display: flex; align-items: center; gap: 2px; line-height: 20px; padding-bottom: 2px; }
    .sub { height: 50px; background: #fff; display: grid; grid-template-columns: 727px 1fr; align-items: center; }
    .crumbs { padding: 0 0 0 100px; display: flex; }
    .crumb { position: relative; height: 34px; width: 90px; }
    .crumb svg { display: block; }
    .crumb.two { width: 92px; margin-left: -1px; color: #0c60e1; font-weight: 700; }
    .crumb div { position: absolute; left: 8px; top: 0; line-height: 32px; font-size: 13px; display: flex; align-items: center; gap: 6px; font-weight: 500; }
    .crumb.two div { left: 15px; gap: 4px; font-weight: 700; }
    .menu { display: flex; font-size: 14px; line-height: 50px; align-items: center; }
    .menu span { padding: 0 12px; }
    .menu .on { color: #0c60e1; font-weight: 700; }
    .menu i { width: 2px; height: 20px; background: #eee; margin: 0 5px; }
  `;
  render() {
    return html`
      <div class="top">
        <div class="logo">中物慧通</div>
        <div class="nav"><span>我的地盘</span><span class="on">产品</span><span>项目</span><span>测试</span><i></i><span>文档</span></div>
        <div class="right">
          <div class="search"><div class="kind">需求 <i class="caret"></i></div><div class="ph">编号(ctrl+g)</div><div class="go">GO!</div></div>
          <div class="user">章维为<i class="caret"></i></div>
        </div>
      </div>
      <div class="sub">
        <div class="crumbs">
          <div class="crumb"><svg width="90" height="34"><path d="M.5.5H81.500L89 17 81.500 33.500H.5z" fill="#fff" stroke="#cbd5e0"/></svg><div>产品主页<i class="caret"></i></div></div>
          <div class="crumb two"><svg width="92" height="34"><path d="M.8.500H84L91.400 17 84 33.500H.8L8.500 17z" fill="#fff" stroke="#2468d0"/></svg><div>小象物流<i class="caret"></i></div></div>
        </div>
        <div class="menu">
          <span class="on">需求</span><i></i><span>计划</span><span>发布</span><span>路线图</span><i></i>
          <span>项目</span><span>动态</span><i></i><span>文档</span><span>概况</span>
        </div>
      </div>`;
  }
}

const HEAD = ["单号", "建单日期", "操作员", "车牌号", "司机手机号", "司机姓名", "已付运费", "服务费用", "品名", "重量", "装货地", "卸货地", ""];
const ROW = ["PCD000100219784", "2018-10-2", "", "", "", "长东", "4641.4", "285.78", "烟煤", "40.36", "内蒙古自治区鄂尔多斯市伊金霍洛旗", "内蒙古自治区包头市昆都仑区", "4927.18"];

@customElement("waybill-sheet")
export class WaybillSheet extends LitElement {
  static styles = css`
    :host { display: block; width: 1107px; font-family: "Liberation Serif", "Noto Serif CJK SC", "Noto Sans CJK SC", serif; font-size: 11.300px; color: #444; white-space: nowrap; }
    .row { display: grid; box-sizing: border-box; grid-template-columns: 5px 101px 114px 62px 55.500px 68.500px 56.500px 56px 57px 56.500px 56px 170px 169.500px 50.500px 1fr; }
    .gap { height: 5px; border-bottom: 1px solid #e2e2e2; }
    .cell { box-sizing: border-box; border-right: 1px solid #cfcfcf; overflow: hidden; }
    .gut { background: #e4e4e4; border-right: 1px solid #999; }
    .head { height: 23px; border-bottom: 1px solid #8d8d8d; }
    .head .cell { display: flex; align-items: flex-end; justify-content: space-between; padding-left: 2px; }
    .cap { line-height: 16px; padding-bottom: 3px; flex: 1; width: 0; overflow: visible; }
    .mid .cap { text-align: center; }
    .drop { flex: none; width: 13px; height: 14px; box-sizing: border-box; border: 1px solid #a8abb0; background: #f4f5f7; display: flex; align-items: center; justify-content: center; }
    .drop i { border: 2px solid transparent; border-top-color: #444; border-bottom: 0; margin-top: 2px; }
    .data { height: 26px; border-bottom: 1px solid #ddd; }
    .data .cell { display: flex; align-items: center; justify-content: center; line-height: 13.500px; text-align: center; letter-spacing: .350px; }
    .data .cell.id { letter-spacing: -.330px; }
    .data .cell.wrap { white-space: normal; padding: 0 5px; letter-spacing: 0; }
    .data .cell.flat { letter-spacing: 0; }
    .data .cell.left { justify-content: flex-start; padding-left: 3px; }
    .data .cell.tail { padding-left: 12px; }
  `;
  render() {
    return html`
      <div class="row gap"><div class="cell gut"></div>${HEAD.map(() => html`<div class="cell"></div>`)}</div>
      <div class="row head"><div class="cell gut"></div>
        ${HEAD.map((h, i) => html`<div class=${classMap({ cell: true, mid: i > 7 })}><span class="cap">${h}</span><span class="drop"><i></i></span></div>`)}
      </div>
      <div class="row data"><div class="cell gut"></div>
        ${ROW.map((v, i) => html`<div class=${classMap({ cell: true, id: i === 0, wrap: i === 10, flat: i === 11, left: i === 1, tail: i === 5 })}><span>${v}</span></div>`)}
      </div>`;
  }
}

const INFO: [string, string, string][] = [
  ["所属产品", "小象物流", "link"], ["所属模块", "/", ""], ["所属计划", "", ""], ["需求来源", "运营", ""],
  ["来源备注", "", ""], ["当前状态", "已变更", "changed"], ["所处阶段", "已立项", ""], ["优先级", "", "pri"],
  ["预计工时", "0", ""], ["关键词", "", ""], ["抄送给", "", ""],
];

@customElement("story-page")
export class StoryPage extends LitElement {
  static styles = css`
    :host { display: flex; flex-direction: column; height: 837px; background: #eee; font-family: "Liberation Sans", "Noto Sans CJK SC", sans-serif; font-size: 13px; color: #3c4353; white-space: nowrap; }
    .main { flex: 1; padding: 10px 100px 0; }
    .title { height: 33px; display: flex; align-items: center; }
    .btn { height: 33px; border-radius: 4px; color: #fff; display: flex; align-items: center; box-sizing: border-box; }
    .btn span { padding-bottom: 2px; }
    .ret { width: 74px; background: #18a6fd; padding-left: 15px; gap: 6px; }
    .ret ui-icon { width: 14px; height: 13px; }
    .new { width: 83px; background: #0c64eb; margin-left: auto; padding-left: 16px; gap: 3px; }
    .new ui-icon { width: 12px; height: 12px; }
    .tsep { width: 1px; height: 20px; background: #d4d4d4; margin: 0 20px; }
    .num { width: 32px; box-sizing: border-box; height: 18px; border: 1px solid #838a9d; border-radius: 2px; color: #838a9d; font-size: 12px; line-height: 16px; text-align: center; }
    .name { font-size: 14px; font-weight: 700; margin-left: 13px; padding-bottom: 1px; }
    .ver { color: #838a9d; margin-left: 3px; }
    .caret { width: 0; height: 0; border: 4px solid transparent; border-top-color: #838a9d; border-bottom: 0; margin-left: 6px; }
    .cols { display: grid; grid-template-columns: 1147px 553px; gap: 20px; margin-top: 10px; align-items: start; }
    .card { background: #fff; border-radius: 4px; box-shadow: 0 1px 2px rgba(0,0,0,.1); box-sizing: border-box; }
    .desc { height: 308px; padding: 20px 20px 0; }
    h3 { margin: 0; font-size: 14px; line-height: 20px; font-weight: 700; height: 20px; }
    waybill-sheet { margin: 10px 0 20px; height: 54px; }
    .sect { border-top: 1px solid #eee; padding-top: 25px; box-sizing: border-box; height: 66px; }
    .hist { display: flex; align-items: center; height: 20px; }
    .hist > ui-icon { margin-bottom: 2px; }
    .hist > ui-icon.a { margin: 0 4px 2px 12px; }
    .note { margin-left: auto; display: flex; gap: 5px; align-items: center; padding-right: 7px; margin-bottom: 4px; line-height: 16px; }
    .note span { padding-bottom: 2px; }
    .log { padding: 7px 0 0 1.500px; line-height: 24px; letter-spacing: -.040px; }
    .ops { margin: 30px auto 0; width: 641px; height: 39px; border-radius: 4px; background: #707070; color: #fff; display: flex; align-items: center; box-sizing: border-box; padding-left: 202px; }
    .ops span { margin-left: 4px; padding-bottom: 2px; }
    .ops .up { border: 4px solid transparent; border-bottom-color: #fff; border-top: 0; margin-left: 6px; }
    .ops .off, .ops .uc { width: 18px; height: 17px; }
    .ops .off { margin-left: 31px; }
    .ops .uc { margin-left: 29.500px; }
    .ops .pl { width: 12px; height: 12px; margin-left: 22.500px; }
    .ops .pl + span { margin-left: 6.500px; }
    .ops i.bar { width: 1px; height: 20px; background: #858585; margin: 0 24px 0 26px; }
    .ops .cp { width: 19px; height: 17px; }
    .ops .cl { width: 14px; height: 14px; margin-left: 31px; }
    .side { display: flex; flex-direction: column; gap: 10px; }
    .info { height: 383px; padding: 0 10px; }
    .task { height: 88px; padding: 0 10px; }
    .tabs { display: flex; height: 39px; border-bottom: 1px solid #dcdcdc; line-height: 43px; gap: 12px; }
    .tabs b { width: 52px; padding: 0 5px; border-bottom: 2px solid #0c60c8; margin-bottom: -1px; box-sizing: content-box; }
    .tabs span { padding-left: 5px; }
    dl { margin: 3.500px 0 0; display: grid; grid-template-columns: 57px 1fr; column-gap: 16px; grid-auto-rows: 30.150px; align-items: center; }
    dt { color: #838a9d; text-align: right; }
    dd { margin: 0; display: flex; align-items: center; }
    .link { color: #0c2f8f; }
    .changed { color: #f55; }
    .changed::before { content: ""; width: 8px; height: 8px; border-radius: 50%; background: #f55; margin-right: 4px; }
    .pri::before { content: ""; width: 16px; height: 16px; border-radius: 50%; border: 2px solid #d5d8de; }
    .line { padding: 14px 5px 0; line-height: 18px; }
    .line span { color: #838a9d; }
    .pager { position: absolute; top: 543px; width: 38px; height: 58px; border-radius: 3px; background: #707070; box-shadow: 0 4px 16px rgba(0,0,0,.08); display: flex; align-items: center; justify-content: center; }
    .prev { left: 51px; }
    .next { left: 1831px; }
    .meter { position: absolute; left: 1910px; top: 360px; width: 10px; height: 59px; box-sizing: border-box; background: #4a4f5c; border: 1px solid #333843; border-right: 0; border-radius: 4px 0 0 4px; padding: 6px 2px 6px 3px; }
    .meter i { display: block; height: 100%; background: repeating-linear-gradient(#0000 0 1px, #4a4f5c 1px 2px), linear-gradient(#2a2d35 12%, #e8896a 13%, #dcc367 35%, #b8d678 60%, #58d6bd 80%); }
    .foot { height: 39px; box-sizing: border-box; background: #fff; display: flex; justify-content: space-between; align-items: center; padding: 0 76px 2px 100px; color: #838a9d; line-height: 20px; }
    .path span + span::before { content: ">"; margin: 0 5px; color: #b9becb; }
    .cred { display: flex; align-items: center; color: #3c4353; }
    .cred .by { font-size: 12px; color: #a0a4ae; margin-right: 11px; letter-spacing: -.030px; }
    .cred ui-icon { margin-right: 5px; }
    .cred .pro { color: #b4824e; margin: 0 5px 0 12px; }
    .cred .ub { width: 13px; height: 13px; margin: 0; }
  `;
  render() {
    return html`
      <div class="main">
        <div class="title">
          <div class="btn ret"><ui-icon name="undo"></ui-icon><span>返回</span></div>
          <i class="tsep"></i><span class="num">156</span><span class="name">小象后台财务模块新增运单导出表格</span><span class="ver">#2</span><i class="caret"></i>
          <div class="btn new"><ui-icon name="plus"></ui-icon><span>提需求</span></div>
        </div>
        <div class="cols">
          <div>
            <div class="card desc">
              <h3>需求描述</h3>
              <waybill-sheet></waybill-sheet>
              <div class="sect"><h3>验收标准</h3></div>
              <div class="sect">
                <div class="hist"><h3>历史记录</h3><ui-icon class="a" name="boxUp"></ui-icon><ui-icon name="boxPlus"></ui-icon>
                  <div class="note"><ui-icon name="comment"></ui-icon><span>添加备注</span></div></div>
                <div class="log"><div>1. 2019-01-22 14:25:59, 由</div><div>2. 2019-01-22 14:27:40, 由</div></div>
              </div>
            </div>
            <div class="ops">
              <ui-icon name="glasses"></ui-icon><span>评审</span>
              <ui-icon class="off" name="off"></ui-icon><span>关闭</span>
              <ui-icon class="uc" name="usecase"></ui-icon><span>用例</span><i class="up"></i>
              <ui-icon class="pl" name="plus"></ui-icon><span>建任务</span>
              <i class="bar"></i><ui-icon class="cp" name="copy"></ui-icon><ui-icon class="cl" name="close"></ui-icon>
            </div>
          </div>
          <div class="side">
            <div class="card info">
              <div class="tabs"><b>基本信息</b><span>需求的一生</span></div>
              <dl>${INFO.map(([k, v, c]) => html`<dt>${k}</dt><dd class=${c}>${v}</dd>`)}</dl>
            </div>
            <div class="card task">
              <div class="tabs"><b>项目任务</b><span>相关信息</span></div>
              <div class="line">#991 小象后台财务模块新增运单导出表格 <span>小象物流1.0期</span></div>
            </div>
          </div>
        </div>
      </div>
      <div class="foot">
        <div class="path"><span>禅道</span><span>产品</span><span>小象物流</span><span>需求</span><span>需求详情</span></div>
        <div class="cred"><span class="by">Designed by 艾体验</span><ui-icon name="zenBall"></ui-icon>禅道11.1<span class="pro">专业版</span><ui-icon class="ub" name="upBadge"></ui-icon></div>
      </div>
      <div class="pager prev"><ui-icon name="left"></ui-icon></div>
      <div class="pager next"><ui-icon name="right"></ui-icon></div>
      <div class="meter"><i></i></div>`;
  }
}

type Entry = { t: string; icon?: string; sub?: boolean; key?: string; hot?: boolean };
const MENU: Entry[][] = [
  [{ t: "在新标签页中打开链接(T)" }, { t: "在新窗口中打开链接(W)" }, { t: "在隐身窗口中打开链接(G)" }],
  [{ t: "链接另存为(K)..." }, { t: "复制链接地址(E)" }],
  [{ t: "在新标签页中打开图片(I)" }, { t: "图片另存为(V)..." }, { t: "复制图片(Y)", hot: true }, { t: "复制图片地址(O)" }],
  [{ t: "AdGuard 广告拦截器", icon: "shield", sub: true }, { t: "FeHelper工具", icon: "fe", sub: true }],
  [{ t: "检查(N)", key: "Ctrl+Shift+I" }],
];

@customElement("context-menu")
export class ContextMenu extends LitElement {
  static styles = css`
    :host { position: absolute; left: 277px; top: 328px; width: 280px; height: 328px; box-sizing: border-box; background: #fff; border: 1px solid #b3b3b3; padding-top: 4px; font: 12px "Open Sans", "Noto Sans CJK SC", sans-serif; color: #000; white-space: nowrap; letter-spacing: .080px; }
    .item { height: 23px; display: grid; grid-template-columns: 24px 1fr auto 24px; align-items: center; padding-left: 8px; line-height: 20px; }
    .hot { background: #e8e9ed; }
    .key { letter-spacing: .400px; }
    .arrow { border: 4px solid transparent; border-left: 5px solid #444; border-right: 0; width: 0; justify-self: end; margin-right: 7px; grid-column: 4; }
    .group + .group { border-top: 1px solid #e6e6e6; margin-top: 4px; padding-top: 6px; }
  `;
  render() {
    return html`${MENU.map((g) => html`<div class="group">${g.map((e) => html`
      <div class=${classMap({ item: true, hot: !!e.hot })}>
        <span>${e.icon ? html`<ui-icon name=${e.icon}></ui-icon>` : nothing}</span><span>${e.t}</span>
        <span class="key">${e.key ?? ""}</span>${e.sub ? html`<i class="arrow"></i>` : nothing}
      </div>`)}</div>`)}`;
  }
}

const TASKS: [string, string][] = [
  ["github", "GitHub ..."], ["chromeBall", "STORY #..."], ["vmware", "Ubuntu ..."], ["reader", "Neat Re..."],
  ["wechat", "微信"], ["wxdev", "微信开发..."], ["wps", "小象角色..."], ["airtest", "C:\\Users..."],
  ["airtest", "Airtest I..."], ["chromeBall", "小象物流..."], ["chromeBall", "小象物流..."], ["photo", "。"],
];
const TRAY = ["cube", "ribbon", "wechat", "qq", "gear", "guard", "bt", "screens", "net", "sound"];

@customElement("task-bar")
export class TaskBar extends LitElement {
  static styles = css`
    :host { display: flex; height: 40px; background: #41210d; color: #fff; font: 12px "Open Sans", "Noto Sans CJK SC", sans-serif; white-space: nowrap; align-items: center; }
    .sys { display: flex; gap: 31.500px; width: 151px; padding-left: 16px; box-sizing: border-box; flex: none; }
    .app { width: 94px; height: 40px; box-sizing: border-box; border-bottom: 2px solid #fbcda8; display: flex; align-items: center; gap: 4px; padding: 0 0 0 3px; margin-right: 9px; flex: none; letter-spacing: .080px; }
    .app ui-icon { width: 24px; height: 24px; }
    .app.first { width: 95px; margin-right: 16px; }
    .app.first ui-icon { width: 18px; height: 20px; margin: 0 3px; }
    .pin { width: 20px; height: 24px; margin-right: 16px; }
    .app.on { background: #87451c; width: 102.500px; margin: 0 4.500px 0 -4px; padding-left: 7px; }
    .tray { margin-left: auto; display: flex; gap: 8.100px; align-items: center; }
    .ime { font-size: 13px; width: 16px; text-align: center; margin: 0 3px 0 -3px; }
    .clock { width: 72px; margin-left: 3px; box-sizing: border-box; padding-right: 4px; text-align: center; line-height: 19px; letter-spacing: .100px; }
    .msg { margin: 0 20px 0 8px; width: 17px; height: 17px; }
    .peek { width: 1px; height: 40px; background: #877568; margin-right: 3px; }
  `;
  render() {
    return html`
      <div class="sys"><ui-icon name="win"></ui-icon><ui-icon name="cortana"></ui-icon><ui-icon name="taskview"></ui-icon></div>
      <div class="app first"><ui-icon name="folder"></ui-icon><span>AirtestID...</span></div>
      <ui-icon class="pin" name="flag4"></ui-icon>
      ${TASKS.map(([icon, cap], i) => html`<div class=${classMap({ app: true, on: i === 1 })}><ui-icon name=${icon}></ui-icon><span>${cap}</span></div>`)}
      <div class="tray">${TRAY.map((n) => html`<ui-icon name=${n}></ui-icon>`)}<span class="ime">中</span></div>
      <div class="clock"><div>15:44</div><div>2019/4/18</div></div>
      <ui-icon class="msg" name="note"></ui-icon><i class="peek"></i>`;
  }
}

@customElement("app-root")
export class AppRoot extends LitElement {
  static styles = css`
    :host { display: block; position: relative; width: 1920px; height: 1080px; overflow: hidden; background: #fff; }
    .status { position: absolute; left: 0; top: 1018px; width: 639px; height: 22px; box-sizing: border-box; background: #fff; border: 1px solid #cfcfcf; border-left: 0; border-bottom: 0; border-radius: 0 4px 0 0; padding-left: 3px; font: 12px/22px "Open Sans", sans-serif; letter-spacing: .260px; color: #6b6e72; }
  `;
  render() {
    return html`
      <browser-chrome></browser-chrome>
      <site-header></site-header>
      <story-page></story-page>
      <task-bar></task-bar>
      <div class="status">pro.l-wl.com/zentao/file-read-6272.png</div>
      <context-menu></context-menu>`;
  }
}
